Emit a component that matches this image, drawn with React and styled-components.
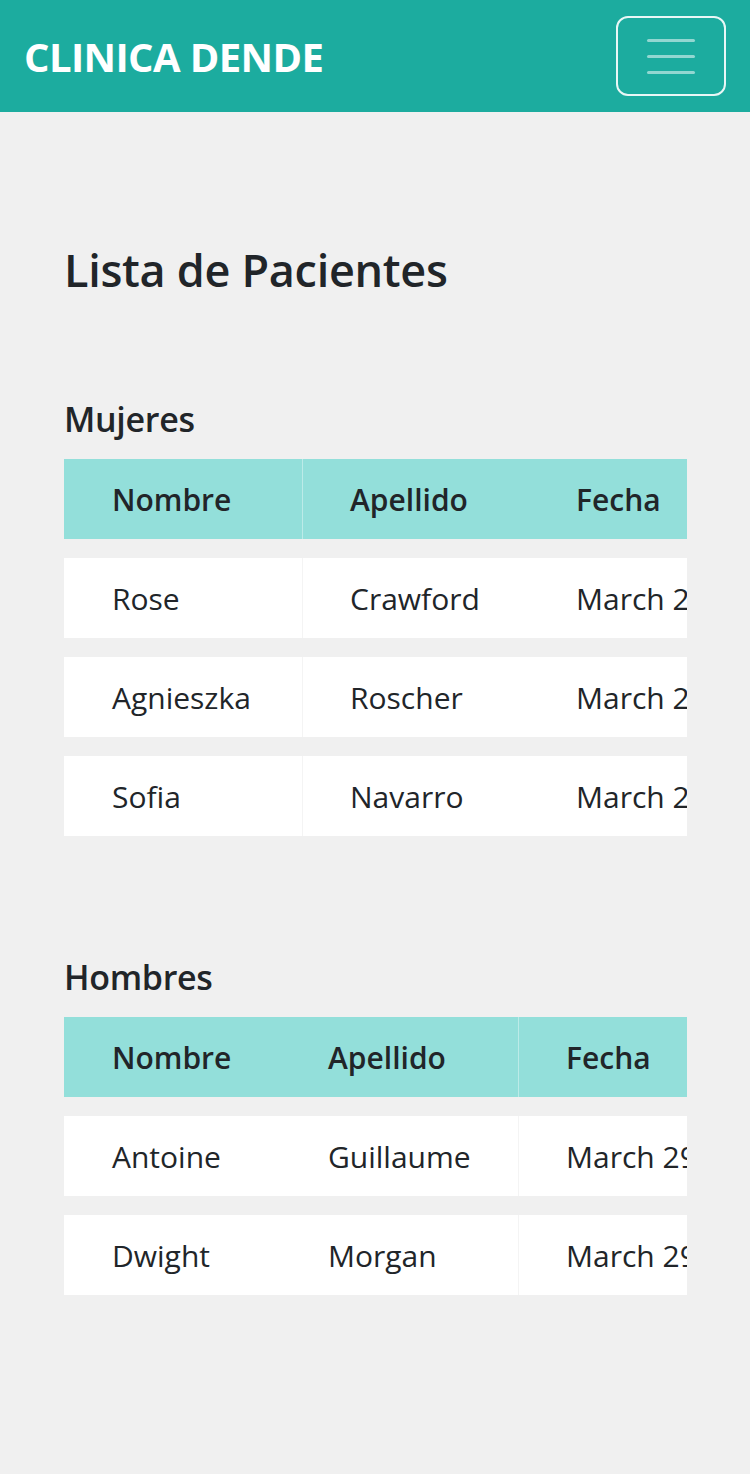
import React from 'react'
import styled, { createGlobalStyle } from 'styled-components'

const GlobalStyle = createGlobalStyle`
  body {
    margin: 0;
    background-color: #f0f0f0;
    font-family: "Open Sans", "Noto Sans", sans-serif;
    color: #212529;
  }
`

const Navbar = styled.nav`
  height: 112px;
  display: flex;
  align-items: center;
  justify-content: space-between;
  padding: 0 24px;
  background-color: #1cac9f;
  box-sizing: border-box;
`

const Brand = styled.a`
  color: #ffffff;
  font-size: 40px;
  font-weight: 700;
  text-decoration: none;
  letter-spacing: -0.6px;
`

const Toggler = styled.button`
  width: 110px;
  height: 80px;
  display: flex;
  flex-direction: column;
  align-items: center;
  justify-content: center;
  gap: 13px;
  background: transparent;
  border: 2px solid rgba(255, 255, 255, 0.9);
  border-radius: 12px;
  padding: 0;
`

const TogglerLine = styled.span`
  display: block;
  width: 48px;
  height: 3px;
  border-radius: 2px;
  background-color: rgba(255, 255, 255, 0.52);
`

const Main = styled.main`
  padding: 128px 63px 100px 64px;
`

const PageTitle = styled.h2`
  margin: 0 0 98px;
  font-size: 45px;
  font-weight: 600;
  line-height: 60px;
  letter-spacing: -0.3px;
`

const Section = styled.section`
  margin-bottom: 101px;
`

const SectionTitle = styled.h4`
  margin: 0;
  font-size: 34px;
  font-weight: 600;
  line-height: 42px;
  letter-spacing: -0.3px;
`

const TableWrap = styled.div`
  overflow: hidden;
`

const Table = styled.table`
  border-collapse: separate;
  border-spacing: 0 19.5px;
  table-layout: fixed;
  font-size: 30px;
`

const Th = styled.th`
  height: 80px;
  padding: 0 0 0 ${(p) => (p.$divider ? 47 : 48)}px;
  background-color: #93dfda;
  text-align: left;
  font-weight: 600;
  white-space: nowrap;
  border-left: ${(p) => (p.$divider ? '1px solid rgba(240, 250, 249, 0.45)' : 'none')};
`

const Td = styled.td`
  height: 80px;
  padding: 0 0 0 ${(p) => (p.$divider ? 47 : 48)}px;
  background-color: #ffffff;
  white-space: nowrap;
  border-left: ${(p) => (p.$divider ? '1px solid #f4f4f4' : 'none')};
`

const columns = ['Nombre', 'Apellido', 'Fecha']

const PatientTable = ({ title, widths, divider, patients }) => {
  const total = widths.reduce((a, b) => a + b, 0)
  return (
    <Section>
      <SectionTitle>{title}</SectionTitle>
      <TableWrap>
        <Table style={{ width: total }}>
          <colgroup>
            {widths.map((w, i) => <col key={i} style={{ width: w }} />)}
          </colgroup>
          <thead>
            <tr>
              {columns.map((c, i) => (
                <Th key={c} $divider={i === divider}>{c}</Th>
              ))}
            </tr>
          </thead>
          <tbody>
            {patients.map((p) => (
              <tr key={p.nombre}>
                {[p.nombre, p.apellido, p.fecha].map((v, i) => (
                  <Td key={i} $divider={i === divider}>{v}</Td>
                ))}
              </tr>
            ))}
          </tbody>
        </Table>
      </TableWrap>
    </Section>
  )
}

const mujeres = [
  { nombre: 'Rose', apellido: 'Crawford', fecha: 'March 29, 2021' },
  { nombre: 'Agnieszka', apellido: 'Roscher', fecha: 'March 29, 2021' },
  { nombre: 'Sofia', apellido: 'Navarro', fecha: 'March 29, 2021' }
]

const hombres = [
  { nombre: 'Antoine', apellido: 'Guillaume', fecha: 'March 29, 2021' },
  { nombre: 'Dwight', apellido: 'Morgan', fecha: 'March 29, 2021' }
]

export default function App () {
  return (
    <>
      <GlobalStyle />
      <Navbar>
        <Brand href="#">CLINICA DENDE</Brand>
        <Toggler aria-label="menu">
          <TogglerLine />
          <TogglerLine />
          <TogglerLine />
        </Toggler>
      </Navbar>
      <Main>
        <PageTitle>Lista de Pacientes</PageTitle>
        <PatientTable title="Mujeres" widths={[238, 226, 320]} divider={1} patients={mujeres} />
        <PatientTable title="Hombres" widths={[216, 238, 320]} divider={2} patients={hombres} />
      </Main>
    </>
  )
}
